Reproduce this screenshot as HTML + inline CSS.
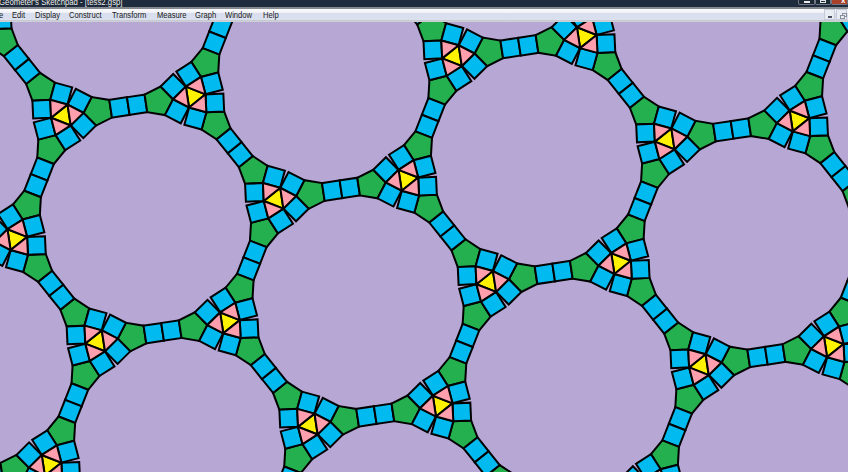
<!DOCTYPE html>
<html><head><meta charset="utf-8"><style>
html,body{margin:0;padding:0;width:848px;height:472px;overflow:hidden;background:#b6a7d5;font-family:"Liberation Sans",sans-serif;}
#canvas{position:absolute;left:0;top:0;width:848px;height:472px;}
polygon{stroke:#000;stroke-width:2.0;stroke-linejoin:miter;}
.yel{fill:#fff200}.pink{fill:#ff9eac}.blue{fill:#00baf0}.green{fill:#24b04e}
#title{position:absolute;left:0;top:0;width:848px;height:6.6px;background:#1e2c3e;overflow:hidden;}
#title span{position:absolute;left:-0.6px;top:-2.4px;line-height:9px;color:#f4f6fa;font-size:9px;transform-origin:0 0;transform:scaleX(0.865);white-space:nowrap;text-shadow:0 0 1px #000;}
#frame{position:absolute;left:0;top:6.6px;width:848px;height:2.3px;background:#858a90;}
#menu{position:absolute;left:0;top:8.9px;width:848px;height:11.4px;background:linear-gradient(#fdfdfe 0,#eef0f6 3.8px,#d8deed 4.3px,#dae0ee 11.4px);}
#mline{position:absolute;left:0;top:20.3px;width:848px;height:1.8px;background:linear-gradient(#c4c7cf,#d2d3d8);}
#menu span{position:absolute;top:2.5px;line-height:8px;font-size:8.6px;color:#1a1a1a;white-space:nowrap;transform-origin:0 0;transform:scaleX(0.885);}
.cb{position:absolute;top:0;height:5px;border:1px solid #6f7884;border-top:none;box-sizing:border-box;border-radius:0 0 2px 2px;}
.mb{position:absolute;top:0.6px;width:11px;height:11px;background:#e8ecf3;border:1px solid #c5ccd8;box-sizing:border-box;}
</style></head><body>
<div id="canvas"><svg width="848" height="472" viewBox="0 0 848 472"><defs><g id="arms"><polygon class="green" points="20.61,0.00 31.10,14.44 48.08,8.93 48.08,-8.93 31.10,-14.44"/><polygon class="blue" points="48.08,-8.93 65.93,-8.93 65.93,8.93 48.08,8.93"/><polygon class="blue" points="65.93,-8.93 83.78,-8.93 83.78,8.93 65.93,8.93"/><polygon class="green" points="111.25,0.00 100.76,14.44 83.78,8.93 83.78,-8.93 100.76,-14.44"/><polygon class="green" points="-10.31,17.85 -28.06,19.72 -31.77,37.18 -16.31,46.10 -3.05,34.16"/><polygon class="blue" points="-16.31,46.10 -25.24,61.56 -40.69,52.64 -31.77,37.18"/><polygon class="blue" points="-25.24,61.56 -34.16,77.02 -49.62,68.09 -40.69,52.64"/><polygon class="green" points="-55.62,96.35 -62.89,80.04 -49.62,68.09 -34.16,77.02 -37.87,94.48"/><polygon class="green" points="-10.31,-17.85 -3.05,-34.16 -16.31,-46.10 -31.77,-37.18 -28.06,-19.72"/><polygon class="blue" points="-31.77,-37.18 -40.69,-52.64 -25.24,-61.56 -16.31,-46.10"/><polygon class="blue" points="-40.69,-52.64 -49.62,-68.09 -34.16,-77.02 -25.24,-61.56"/><polygon class="green" points="-55.62,-96.35 -37.87,-94.48 -34.16,-77.02 -49.62,-68.09 -62.89,-80.04"/></g><g id="ca"><polygon class="blue" points="20.61,0.00 6.17,10.49 16.66,24.93 31.10,14.44"/><polygon class="blue" points="20.61,0.00 6.17,-10.49 16.66,-24.93 31.10,-14.44"/><polygon class="blue" points="-10.31,17.85 -12.17,0.10 -29.92,1.96 -28.06,19.72"/><polygon class="blue" points="-10.31,17.85 6.00,10.59 13.26,26.90 -3.05,34.16"/><polygon class="blue" points="-10.31,-17.85 6.00,-10.59 13.26,-26.90 -3.05,-34.16"/><polygon class="blue" points="-10.31,-17.85 -12.17,-0.10 -29.92,-1.96 -28.06,-19.72"/><polygon class="yel" points="6.09,10.54 -12.17,0.00 6.09,-10.54"/><polygon class="pink" points="20.61,0.00 6.09,10.54 6.09,-10.54"/><polygon class="pink" points="-10.31,17.85 -12.17,0.00 6.09,10.54"/><polygon class="pink" points="-10.31,-17.85 6.09,-10.54 -12.17,0.00"/></g><g id="cb"><polygon class="blue" points="-20.61,0.00 -6.17,-10.49 -16.66,-24.93 -31.10,-14.44"/><polygon class="blue" points="-20.61,0.00 -6.17,10.49 -16.66,24.93 -31.10,14.44"/><polygon class="blue" points="10.31,-17.85 12.17,-0.10 29.92,-1.96 28.06,-19.72"/><polygon class="blue" points="10.31,-17.85 -6.00,-10.59 -13.26,-26.90 3.05,-34.16"/><polygon class="blue" points="10.31,17.85 -6.00,10.59 -13.26,26.90 3.05,34.16"/><polygon class="blue" points="10.31,17.85 12.17,0.10 29.92,1.96 28.06,19.72"/><polygon class="yel" points="-6.09,-10.54 12.17,-0.00 -6.09,10.54"/><polygon class="pink" points="-20.61,0.00 -6.09,-10.54 -6.09,10.54"/><polygon class="pink" points="10.31,-17.85 12.17,-0.00 -6.09,-10.54"/><polygon class="pink" points="10.31,17.85 -6.09,10.54 12.17,-0.00"/></g></defs><use href="#arms" transform="translate(-183.85,-193.09) rotate(-8.630)"/><use href="#arms" transform="translate(-149.58,32.72) rotate(-8.630)"/><use href="#arms" transform="translate(28.83,-109.86) rotate(-8.630)"/><use href="#arms" transform="translate(-115.31,258.52) rotate(-8.630)"/><use href="#arms" transform="translate(63.10,115.94) rotate(-8.630)"/><use href="#arms" transform="translate(241.52,-26.64) rotate(-8.630)"/><use href="#arms" transform="translate(419.94,-169.22) rotate(-8.630)"/><use href="#arms" transform="translate(-81.04,484.32) rotate(-8.630)"/><use href="#arms" transform="translate(97.37,341.74) rotate(-8.630)"/><use href="#arms" transform="translate(275.79,199.16) rotate(-8.630)"/><use href="#arms" transform="translate(454.21,56.58) rotate(-8.630)"/><use href="#arms" transform="translate(632.62,-86.00) rotate(-8.630)"/><use href="#arms" transform="translate(131.64,567.54) rotate(-8.630)"/><use href="#arms" transform="translate(310.06,424.96) rotate(-8.630)"/><use href="#arms" transform="translate(488.48,282.38) rotate(-8.630)"/><use href="#arms" transform="translate(666.89,139.80) rotate(-8.630)"/><use href="#arms" transform="translate(845.31,-2.78) rotate(-8.630)"/><use href="#arms" transform="translate(1023.72,-145.36) rotate(-8.630)"/><use href="#arms" transform="translate(344.33,650.76) rotate(-8.630)"/><use href="#arms" transform="translate(522.75,508.18) rotate(-8.630)"/><use href="#arms" transform="translate(701.16,365.60) rotate(-8.630)"/><use href="#arms" transform="translate(879.58,223.02) rotate(-8.630)"/><use href="#arms" transform="translate(735.43,591.41) rotate(-8.630)"/><use href="#arms" transform="translate(913.85,448.83) rotate(-8.630)"/><use href="#arms" transform="translate(948.12,674.63) rotate(-8.630)"/><use href="#ca" transform="translate(-183.85,-193.09) rotate(-8.630)"/><use href="#cb" transform="translate(-53.48,-212.87) rotate(-8.630)"/><use href="#ca" transform="translate(-149.58,32.72) rotate(-8.630)"/><use href="#cb" transform="translate(-19.21,12.93) rotate(-8.630)"/><use href="#ca" transform="translate(28.83,-109.86) rotate(-8.630)"/><use href="#cb" transform="translate(159.20,-129.65) rotate(-8.630)"/><use href="#ca" transform="translate(-115.31,258.52) rotate(-8.630)"/><use href="#cb" transform="translate(15.06,238.73) rotate(-8.630)"/><use href="#ca" transform="translate(63.10,115.94) rotate(-8.630)"/><use href="#cb" transform="translate(193.47,96.15) rotate(-8.630)"/><use href="#ca" transform="translate(241.52,-26.64) rotate(-8.630)"/><use href="#cb" transform="translate(371.89,-46.43) rotate(-8.630)"/><use href="#ca" transform="translate(419.94,-169.22) rotate(-8.630)"/><use href="#cb" transform="translate(550.30,-189.01) rotate(-8.630)"/><use href="#ca" transform="translate(-81.04,484.32) rotate(-8.630)"/><use href="#cb" transform="translate(49.33,464.53) rotate(-8.630)"/><use href="#ca" transform="translate(97.37,341.74) rotate(-8.630)"/><use href="#cb" transform="translate(227.74,321.95) rotate(-8.630)"/><use href="#ca" transform="translate(275.79,199.16) rotate(-8.630)"/><use href="#cb" transform="translate(406.16,179.37) rotate(-8.630)"/><use href="#ca" transform="translate(454.21,56.58) rotate(-8.630)"/><use href="#cb" transform="translate(584.57,36.79) rotate(-8.630)"/><use href="#ca" transform="translate(632.62,-86.00) rotate(-8.630)"/><use href="#cb" transform="translate(762.99,-105.79) rotate(-8.630)"/><use href="#ca" transform="translate(131.64,567.54) rotate(-8.630)"/><use href="#cb" transform="translate(262.01,547.76) rotate(-8.630)"/><use href="#ca" transform="translate(310.06,424.96) rotate(-8.630)"/><use href="#cb" transform="translate(440.43,405.18) rotate(-8.630)"/><use href="#ca" transform="translate(488.48,282.38) rotate(-8.630)"/><use href="#cb" transform="translate(618.84,262.60) rotate(-8.630)"/><use href="#ca" transform="translate(666.89,139.80) rotate(-8.630)"/><use href="#cb" transform="translate(797.26,120.02) rotate(-8.630)"/><use href="#ca" transform="translate(845.31,-2.78) rotate(-8.630)"/><use href="#cb" transform="translate(975.67,-22.56) rotate(-8.630)"/><use href="#ca" transform="translate(1023.72,-145.36) rotate(-8.630)"/><use href="#cb" transform="translate(1154.09,-165.14) rotate(-8.630)"/><use href="#ca" transform="translate(344.33,650.76) rotate(-8.630)"/><use href="#cb" transform="translate(474.70,630.98) rotate(-8.630)"/><use href="#ca" transform="translate(522.75,508.18) rotate(-8.630)"/><use href="#cb" transform="translate(653.11,488.40) rotate(-8.630)"/><use href="#ca" transform="translate(701.16,365.60) rotate(-8.630)"/><use href="#cb" transform="translate(831.53,345.82) rotate(-8.630)"/><use href="#ca" transform="translate(879.58,223.02) rotate(-8.630)"/><use href="#cb" transform="translate(1009.94,203.24) rotate(-8.630)"/><use href="#ca" transform="translate(735.43,591.41) rotate(-8.630)"/><use href="#cb" transform="translate(865.80,571.62) rotate(-8.630)"/><use href="#ca" transform="translate(913.85,448.83) rotate(-8.630)"/><use href="#cb" transform="translate(1044.21,429.04) rotate(-8.630)"/><use href="#ca" transform="translate(948.12,674.63) rotate(-8.630)"/><use href="#cb" transform="translate(1078.48,654.84) rotate(-8.630)"/></svg></div>
<div id="title"><span>Geometer's Sketchpad - [tess2.gsp]</span>
<div class="cb" style="left:798px;width:17px;background:#1d2835"><div style="position:absolute;left:5px;top:1px;width:6px;height:2px;background:#e8eaee"></div></div>
<div class="cb" style="left:815px;width:16px;background:#1d2835"><div style="position:absolute;left:4px;top:0px;width:6px;height:3px;border:1px solid #e0e3e8;box-sizing:border-box;"></div></div>
<div class="cb" style="left:831px;width:17px;background:#a8402a"><div style="position:absolute;left:9px;top:-3px;color:#fff;font-size:8px;line-height:8px;font-weight:bold">x</div></div>
</div>
<div id="frame"></div>
<div id="menu"><span style="left:-9.5px">File</span><span style="left:12.2px">Edit</span><span style="left:34.8px">Display</span><span style="left:68.5px">Construct</span><span style="left:111.8px">Transform</span><span style="left:156.6px">Measure</span><span style="left:195.4px">Graph</span><span style="left:225px">Window</span><span style="left:263px">Help</span>
<div class="mb" style="left:824px"><div style="position:absolute;left:3px;top:6px;width:4px;height:1.5px;background:#4a5060"></div></div><div class="mb" style="left:836px"><div style="position:absolute;left:4.5px;top:2.5px;width:3.5px;height:2.5px;border:1px solid #8a909c"></div><div style="position:absolute;left:2.5px;top:4.5px;width:3.5px;height:2.5px;border:1px solid #8a909c;background:#e8ecf3"></div></div></div>
<div id="mline"></div>
</body></html>
